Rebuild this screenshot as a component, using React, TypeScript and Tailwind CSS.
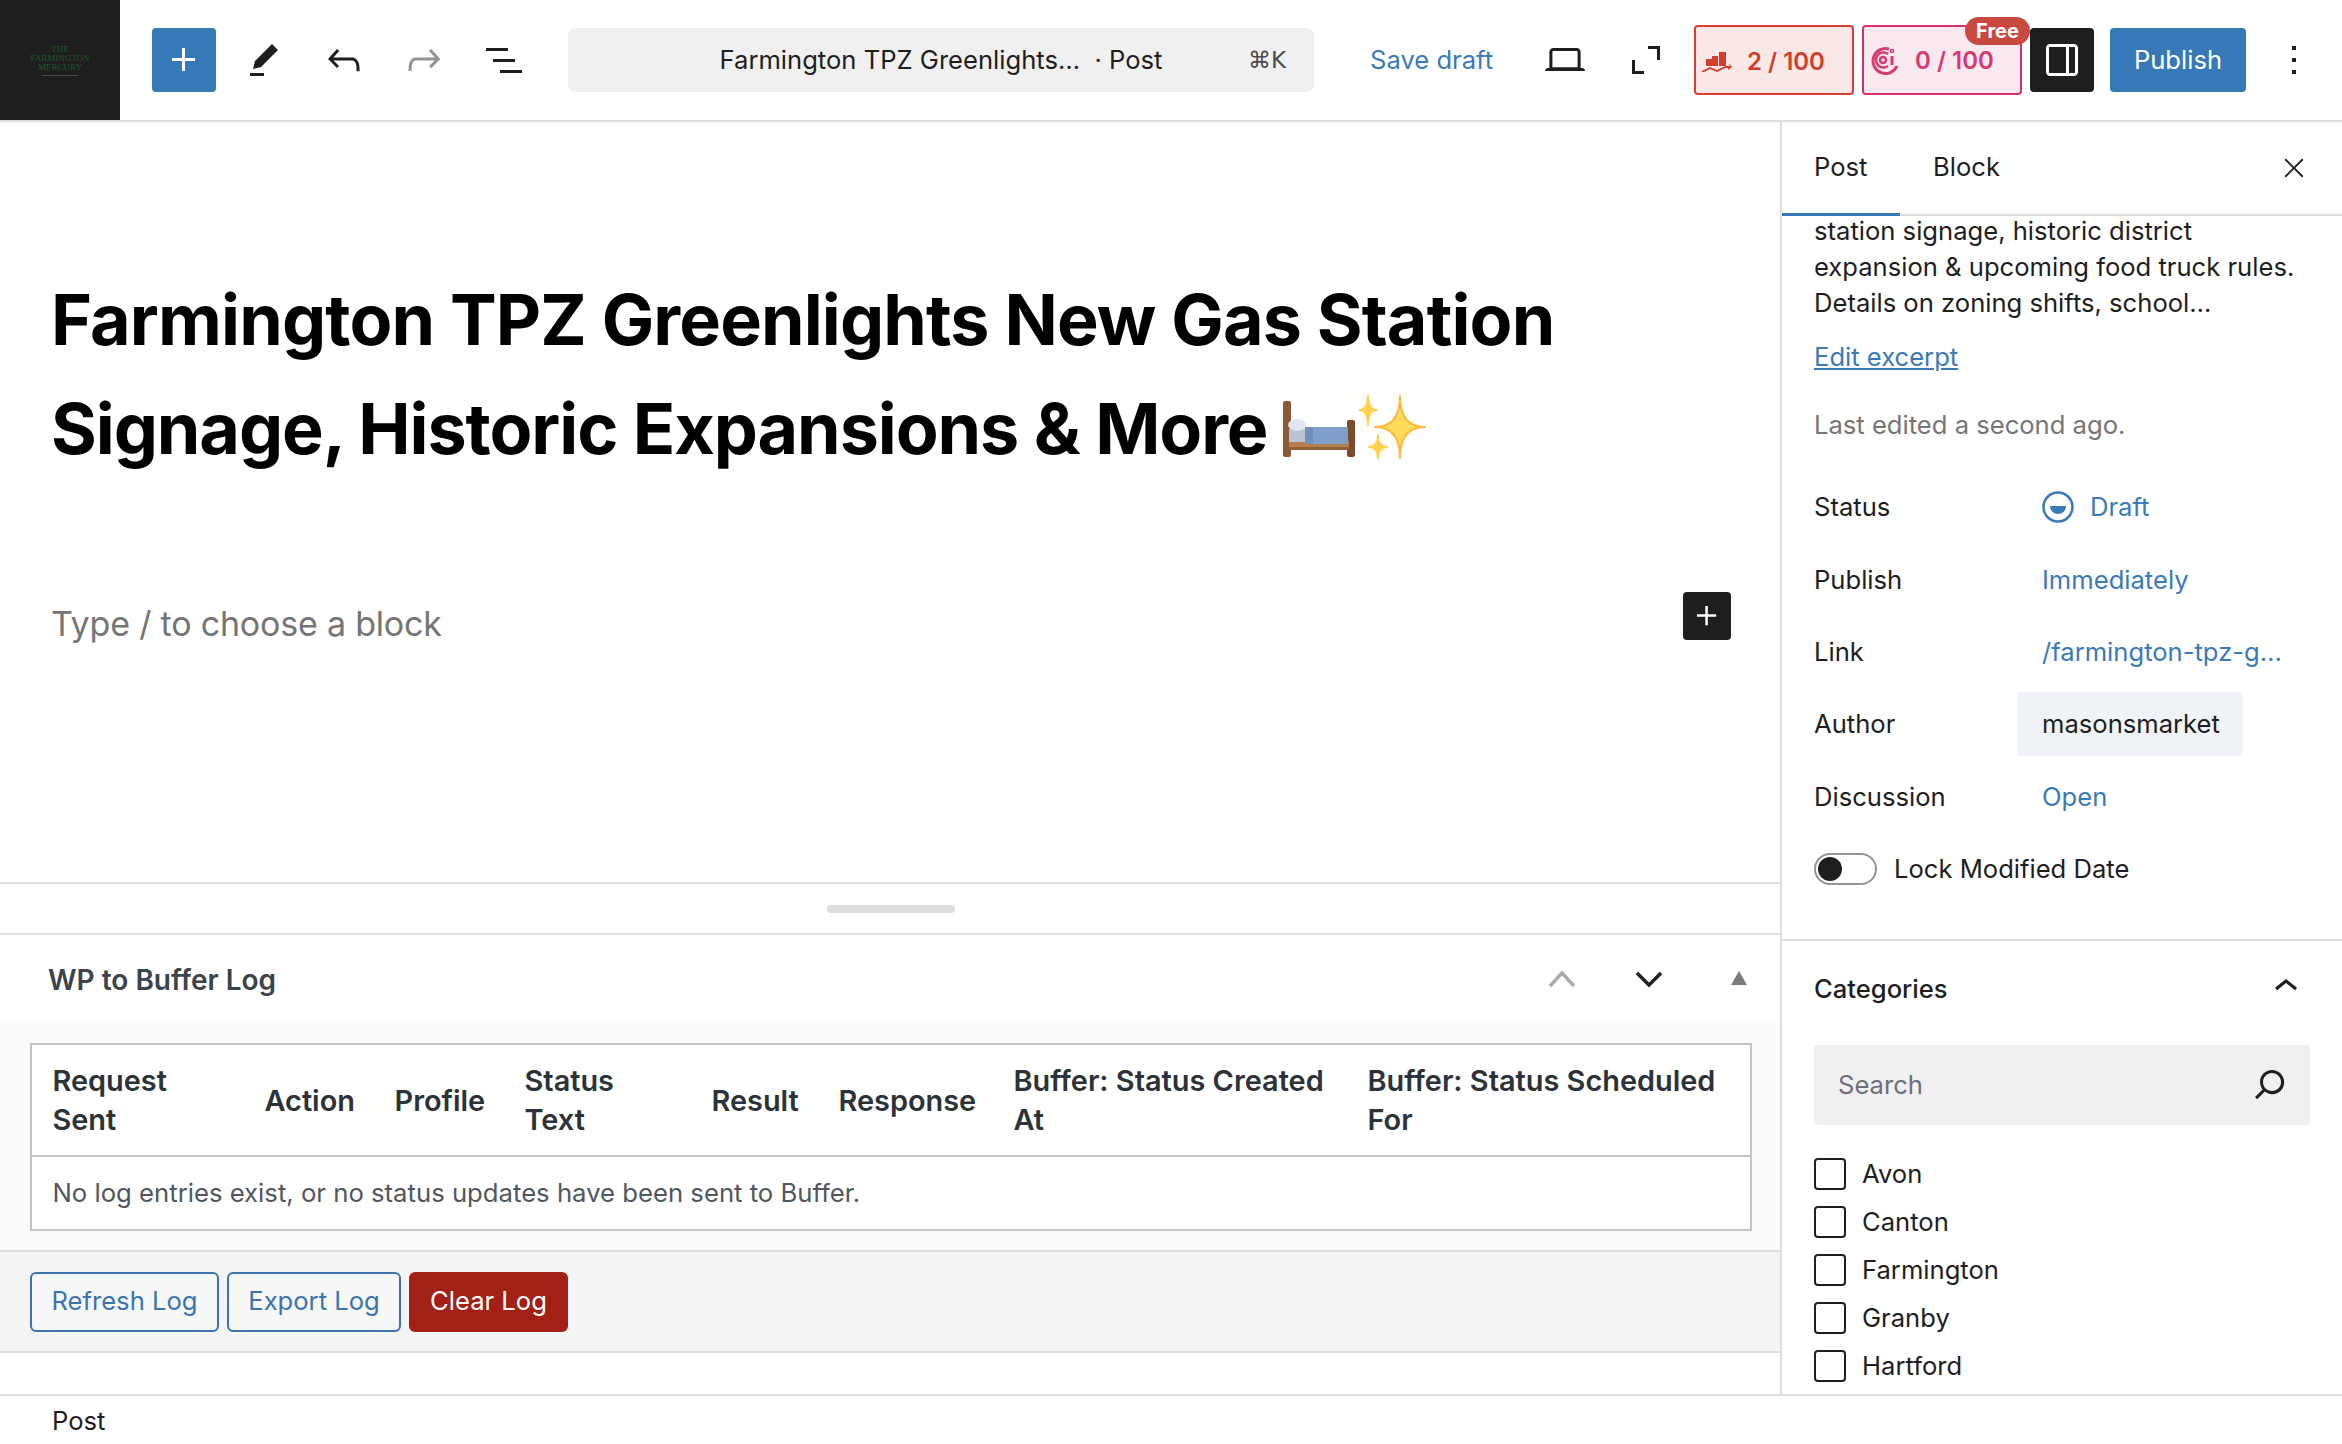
const Icon = ({ d, className = "w-12 h-12 fill-[#1e1e1e]" }: { d: string; className?: string }) => (
    <svg viewBox="0 0 24 24" className={className}>
        <path d={d} />
    </svg>
)

const icons = {
    plus: "M11 12.5V17.5H12.5V12.5H17.5V11H12.5V6H11V11H6V12.5H11Z",
    pen: "m19 7-3-3-8.5 8.5-1 4 4-1L19 7Zm-7 11.5H5V20h7v-1.5Z",
    undo: "M18.3 11.7c-.6-.6-1.4-.9-2.3-.9H6.7l2.9-3.3-1.1-1-4.5 5L8.5 16l1-1-2.7-2.7H16c.5 0 .9.2 1.3.5 1 1 1 3.4 1 4.5v.3h1.5v-.2c0-1.5 0-4.3-1.5-5.7z",
    redo: "M15.6 6.5l-1.1 1 2.9 3.3H8c-.9 0-1.7.3-2.3.9-1.4 1.5-1.4 4.2-1.4 5.6v.2h1.5v-.3c0-1.1 0-3.5 1-4.5.3-.3.7-.5 1.3-.5h9.2L14.5 15l1.1 1.1 4.6-4.6-4.6-5z",
    list: "M3 6h11v1.5H3V6Zm3.5 5.5h11V13h-11v-1.5ZM21 17H10v1.5h11V17Z",
    laptop: "M20.5 16h-.7V8c0-1.1-.9-2-2-2H6.2c-1.1 0-2 .9-2 2v8h-.7c-.8 0-1.5.7-1.5 1.5h20c0-.8-.7-1.5-1.5-1.5zM5.7 8c0-.3.2-.5.5-.5h11.6c.3 0 .5.2.5.5v7.6H5.7V8z",
    fullscreen: "M5 12v7h6v-1.5H6.5V12H5Z M13 5v1.5h4.5V12H19V5h-6Z",
    sidebar: "M18 4H6c-1.1 0-2 .9-2 2v12c0 1.1.9 2 2 2h12c1.1 0 2-.9 2-2V6c0-1.1-.9-2-2-2zm-4 14.5H6c-.3 0-.5-.2-.5-.5V6c0-.3.2-.5.5-.5h8v13zm4.5-.5c0 .3-.2.5-.5.5h-2.5v-13H18c.3 0 .5.2.5.5v12z",
    more: "M13 19h-2v-2h2v2zm0-6h-2v-2h2v2zm0-6h-2V5h2v2z",
    close: "m13.06 12 6.47-6.47-1.06-1.06L12 10.94 5.53 4.47 4.47 5.53 10.94 12l-6.47 6.47 1.06 1.06L12 13.06l6.47 6.47 1.06-1.06L13.06 12Z",
    chevronUp: "M6.5 12.4L12 8l5.5 4.4-.9 1.2L12 10l-4.5 3.6-1-1.2z",
    search: "M13 5c-3.3 0-6 2.7-6 6 0 1.4.5 2.7 1.3 3.7l-3.8 3.8 1.1 1.1 3.8-3.8c1 .8 2.3 1.3 3.7 1.3 3.3 0 6-2.7 6-6S16.3 5 13 5zm0 10.5c-2.5 0-4.5-2-4.5-4.5s2-4.5 4.5-4.5 4.5 2 4.5 4.5-2 4.5-4.5 4.5z",
}

const Bed = () => (
    <svg viewBox="0 0 72 56" className="inline-block w-[72px] h-[56px] align-[-3px]">
        <rect x="0" y="0" width="8" height="56" rx="2" fill="#8a5a34" />
        <rect x="64" y="19" width="8" height="37" rx="2" fill="#7a4c2a" />
        <rect x="6" y="40" width="60" height="9" fill="#b57f4e" />
        <rect x="6" y="46" width="60" height="3" fill="#8f5f36" />
        <rect x="6" y="28" width="18" height="13" fill="#b9c4d2" />
        <ellipse cx="14" cy="24" rx="9" ry="6" fill="#dfe6f1" />
        <rect x="22" y="26" width="43" height="17" rx="1" fill="#7f9fc8" />
        <rect x="22" y="26" width="8" height="17" fill="#6f90bb" />
    </svg>
)

const star = (cx: number, cy: number, r: number, h: number) =>
    `M${cx} ${cy - h}Q${cx} ${cy} ${cx + r} ${cy}Q${cx} ${cy} ${cx} ${cy + h}Q${cx} ${cy} ${cx - r} ${cy}Q${cx} ${cy} ${cx} ${cy - h}Z`

const Sparkles = () => (
    <svg viewBox="0 0 68 64" className="inline-block w-[68px] h-[64px] align-[-5px] ml-[4px]">
        <path d={star(9, 15, 9, 15)} fill="#fdd24d" stroke="#fdd24d" strokeWidth="2" strokeLinejoin="round" />
        <path d={star(19, 52, 9, 12)} fill="#fdd24d" stroke="#fdd24d" strokeWidth="2" strokeLinejoin="round" />
        <path d={star(41, 32, 25, 31)} fill="#fddc5c" stroke="#fbb93e" strokeWidth="2" strokeLinejoin="round" />
    </svg>
)

const RowLabel = ({ label, children }: { label: string; children: any }) => (
    <div className="flex items-center h-[72.4px]">
        <div className="w-[228px] shrink-0">{label}</div>
        {children}
    </div>
)

const cols = [
    ["w-[212px]", "Request\nSent"],
    ["w-[130px]", "Action"],
    ["w-[130px]", "Profile"],
    ["w-[187px]", "Status\nText"],
    ["w-[127px]", "Result"],
    ["w-[175px]", "Response"],
    ["w-[354px]", "Buffer: Status Created\nAt"],
    ["", "Buffer: Status Scheduled\nFor"],
]

const categories = ["Avon", "Canton", "Farmington", "Granby", "Hartford"]

export default function App() {
    return (
        <div className="w-[2342px] h-[1444px] overflow-hidden flex flex-col bg-white text-[#1e1e1e] text-[25.6px] font-['Inter',sans-serif]">
            {/* top bar */}
            <div className="h-[122px] shrink-0 flex items-center border-b-2 border-[#dedede]">
                <div className="w-[120px] h-[120px] bg-[#1e1e1e] flex flex-col items-center justify-center text-[#1f5a2e] font-['Liberation_Serif',serif] text-[9px] leading-[9px] uppercase">
                    <span>The</span>
                    <span>Farmington</span>
                    <span>Mercury</span>
                    <span className="w-[36px] h-px bg-[#4a4a4a] mt-[3px]"></span>
                </div>
                <button className="ml-[32px] w-16 h-16 rounded-[4px] bg-[#3579b6] flex items-center justify-center">
                    <Icon d={icons.plus} className="w-12 h-12 fill-white" />
                </button>
                <div className="ml-4 flex gap-4">
                    <div className="w-16 h-16 flex items-center justify-center"><Icon d={icons.pen} /></div>
                    <div className="w-16 h-16 flex items-center justify-center"><Icon d={icons.undo} /></div>
                    <div className="w-16 h-16 flex items-center justify-center"><Icon d={icons.redo} className="w-12 h-12 fill-[#949494]" /></div>
                    <div className="w-16 h-16 flex items-center justify-center"><Icon d={icons.list} /></div>
                </div>
                <div className="ml-[32px] w-[746px] h-16 pt-[1px] rounded-[8px] bg-[#f0f0f0] grid grid-cols-[1fr_auto_1fr] items-center">
                    <span></span>
                    <span className="whitespace-pre">Farmington TPZ Greenlights…  · Post</span>
                    <span className="justify-self-end pr-[28px] text-[#4a4a4a] font-['DejaVu_Sans','Inter',sans-serif] text-[23px]">⌘K</span>
                </div>
                <div className="ml-[56px] w-[163px] text-[#3a7ab8]">Save draft</div>
                <div className="w-16 h-16 flex items-center justify-center"><Icon d={icons.laptop} /></div>
                <div className="ml-[17px] w-16 h-16 flex items-center justify-center"><Icon d={icons.fullscreen} /></div>
                <div className="ml-[16px] w-[160px] h-[70px] rounded-[4px] border-2 border-[#d9402f] bg-[#f8e8e6] flex items-center text-[#d43c2e] font-semibold text-[24px]">
                    <svg viewBox="0 0 30 20" className="ml-[6px] mt-[3px] w-[30px] h-[20px] fill-[#d43c2e]">
                        <rect x="4" y="7" width="6" height="7" />
                        <rect x="10" y="4" width="6" height="10" />
                        <rect x="17" y="0" width="7" height="14" />
                        <path d="M0 19l8-4 7 3 8-4 5 0-1-3 3 4-4 3 0-2-3 0-8 4-7-3-8 4z" />
                    </svg>
                    <span className="ml-[15px] mt-[3px]">2 / 100</span>
                </div>
                <div className="relative ml-[8px] w-[160px] h-[70px] rounded-[4px] border-2 border-[#d6336c] bg-[#fae8ef] flex items-center text-[#d63a6f] font-semibold text-[24px]">
                    <svg viewBox="0 0 30 30" className="ml-[5px] w-[30px] h-[30px] fill-none stroke-[#d63a6f]">
                        <path d="M20 4A12.5 12.5 0 1 0 28 21" strokeWidth="3" />
                        <path d="M19 9A7.5 7.5 0 1 0 19 21" strokeWidth="2.5" />
                        <circle cx="14" cy="15" r="3" strokeWidth="2.5" />
                        <path d="M23 11v9" strokeWidth="3" />
                        <circle cx="23" cy="6" r="1.6" strokeWidth="1.5" />
                    </svg>
                    <span className="ml-[16px] mt-[1px]">0 / 100</span>
                    <span className="absolute -top-[10px] -right-[10px] w-[65px] h-[28px] rounded-[14px] bg-[#c94840] text-white text-[20px] font-bold flex items-center justify-center">Free</span>
                </div>
                <button className="ml-[8px] w-16 h-16 rounded-[4px] bg-[#1e1e1e] flex items-center justify-center">
                    <Icon d={icons.sidebar} className="w-12 h-12 fill-white" />
                </button>
                <button className="ml-4 w-[136px] h-16 rounded-[4px] bg-[#3579b6] text-white">Publish</button>
                <div className="ml-4 w-16 h-16 flex items-center justify-center"><Icon d={icons.more} /></div>
            </div>

            <div className="flex-1 flex min-h-0">
                {/* editor column */}
                <div className="w-[1780px] shrink-0 flex flex-col">
                    <div className="h-[762px] shrink-0 border-b-2 border-[#dedede] pl-[51px] pr-[49px]">
                        <h1 className="pt-[143px] font-bold text-[70px] leading-[109px] text-black tracking-[-0.85px]">
                            Farmington TPZ Greenlights New Gas Station<br />
                            <span className="tracking-[-1.07px]">Signage, Historic Expansions & More </span><Bed /><Sparkles />
                        </h1>
                        <div className="mt-[109px] flex justify-between items-start">
                            <div className="pt-[4px] text-[34px] leading-[56px] text-[#757575] tracking-[-0.2px]">Type / to choose a block</div>
                            <button className="w-12 h-12 rounded-[4px] bg-[#1e1e1e] flex items-center justify-center">
                                <Icon d={icons.plus} className="w-10 h-10 fill-white" />
                            </button>
                        </div>
                    </div>
                    <div className="h-[51px] shrink-0 border-b-2 border-[#dedede] flex items-center justify-center">
                        <div className="ml-[2px] w-[128px] h-[8px] rounded-[4px] bg-[#dddddd]"></div>
                    </div>
                    <div className="h-[88px] shrink-0 flex items-center pl-[48px]">
                        <div className="flex-1 font-semibold text-[#3c434a] text-[28px] pt-[2px]">WP to Buffer Log</div>
                        <svg viewBox="0 0 28 18" className="w-[28px] h-[18px] fill-none stroke-[#aaaaaa] stroke-[3.5px]"><path d="M2 16L14 3L26 16" /></svg>
                        <svg viewBox="0 0 28 18" className="ml-[59px] w-[28px] h-[18px] fill-none stroke-[#1d2327] stroke-[3.5px]"><path d="M2 3L14 15L26 3" /></svg>
                        <svg viewBox="0 0 18 14" className="ml-[67px] mr-[32px] -mt-[2px] w-[18px] h-[14px] fill-[#7a7a7a]"><path d="M9 0L17 14H1Z" /></svg>
                    </div>
                    <div className="h-[229px] shrink-0 bg-[#fafafa] border-b-2 border-[#dedede] pt-[20px] pl-[30px] pr-[28px]">
                        <table className="w-full table-fixed border-2 border-[#c3c4c7] bg-white border-separate border-spacing-0">
                            <thead>
                                <tr>
                                    {cols.map(c => (
                                        <th key={c[1]} className={`${c[0]} pl-[20.5px] pr-0 h-[112px] text-left font-semibold text-[28.9px] leading-[39px] text-[#2c3338] border-b-2 border-[#c3c4c7] whitespace-pre-line`}>{c[1]}</th>
                                    ))}
                                </tr>
                            </thead>
                            <tbody>
                                <tr>
                                    <td colSpan={8} className="pl-[20.5px] h-[72px] text-[#50575e] text-[25.7px]">No log entries exist, or no status updates have been sent to Buffer.</td>
                                </tr>
                            </tbody>
                        </table>
                    </div>
                    <div className="h-[101px] shrink-0 bg-[#f4f4f4] border-b-2 border-[#dedede] flex items-center gap-[8px] pl-[30px]">
                        <button className="w-[189px] h-[60px] rounded-[6px] border-2 border-[#3a74b0] bg-[#f6f7f7] text-[#3a74b0]">Refresh Log</button>
                        <button className="w-[174px] h-[60px] rounded-[6px] border-2 border-[#3a74b0] bg-[#f6f7f7] text-[#3a74b0]">Export Log</button>
                        <button className="w-[159px] h-[60px] rounded-[6px] bg-[#a32014] text-white">Clear Log</button>
                    </div>
                    <div className="flex-1"></div>
                </div>

                {/* sidebar */}
                <div className="flex-1 border-l-2 border-[#dedede] flex flex-col overflow-hidden">
                    <div className="h-[94px] shrink-0 border-b-2 border-[#dedede] flex items-center">
                        <div className="w-[118px] h-[93px] pl-[32px] pb-[1px] flex items-center border-b-[3px] border-[#3579b6] -mb-[3px]">Post</div>
                        <div className="ml-[33px] -mt-[2px]">Block</div>
                        <div className="ml-auto mr-[24px] w-12 h-12 flex items-center justify-center"><Icon d={icons.close} className="w-[30px] h-[30px] fill-[#1e1e1e]" /></div>
                    </div>
                    <div className="flex-1 overflow-hidden">
                        <div className="-mt-[3px] pl-[32px] pr-[30px] leading-[36px]">
                            <div>station signage, historic district<br />expansion & upcoming food truck rules.<br />Details on zoning shifts, school…</div>
                            <div className="mt-[18px] text-[#3a7ab8] underline">Edit excerpt</div>
                            <div className="mt-[32px] text-[#757575]">Last edited a second ago.</div>
                            <div className="mt-[28px] h-[434px]">
                                <RowLabel label="Status">
                                    <svg viewBox="0 0 32 32" className="w-[32px] h-[32px]">
                                        <circle cx="16" cy="16" r="14.5" fill="none" stroke="#3a7ab8" strokeWidth="2.5" />
                                        <path d="M8 15h16a8 8 0 0 1-16 0Z" fill="#3a7ab8" />
                                    </svg>
                                    <span className="ml-[16px] text-[#3a7ab8]">Draft</span>
                                </RowLabel>
                                <RowLabel label="Publish"><span className="text-[#3a7ab8]">Immediately</span></RowLabel>
                                <RowLabel label="Link"><span className="text-[#3a7ab8]">/farmington-tpz-g…</span></RowLabel>
                                <RowLabel label="Author">
                                    <span className="-ml-[25px] pl-[25px] w-[226px] h-[64px] rounded-[4px] bg-[#f0f4f8] flex items-center">masonsmarket</span>
                                </RowLabel>
                                <RowLabel label="Discussion"><span className="text-[#3a7ab8]">Open</span></RowLabel>
                                <div className="flex items-center h-[72.4px]">
                                    <div className="w-[63px] h-[32px] rounded-[16px] border-2 border-[#949494] bg-white flex items-center pl-[2px]">
                                        <div className="w-[24px] h-[24px] rounded-full bg-[#1e1e1e]"></div>
                                    </div>
                                    <span className="ml-[17px]">Lock Modified Date</span>
                                </div>
                            </div>
                        </div>
                        <div className="mt-[34px] border-t-2 border-[#dedede] pl-[32px] pr-[32px]">
                            <div className="h-[96px] flex items-center justify-between font-medium">
                                <span>Categories</span>
                                <Icon d={icons.chevronUp} className="w-12 h-12 fill-[#1e1e1e] -mt-[4px]" />
                            </div>
                            <div className="mt-[8px] h-[80px] rounded-[4px] bg-[#f0f0f0] flex items-center justify-between pl-[24px] pr-[16px]">
                                <span className="text-[#6d6f76]">Search</span>
                                <Icon d={icons.search} className="w-12 h-12 fill-[#1e1e1e] -mt-[3px]" />
                            </div>
                            <div className="mt-[25px] flex flex-col">
                                {categories.map(c => (
                                    <div key={c} className="h-[48px] flex items-center">
                                        <div className="w-[32px] h-[32px] rounded-[4px] border-2 border-[#1e1e1e] bg-white"></div>
                                        <span className="ml-[16px]">{c}</span>
                                    </div>
                                ))}
                            </div>
                        </div>
                    </div>
                </div>
            </div>

            {/* footer */}
            <div className="h-[50px] shrink-0 border-t-2 border-[#dedede] flex items-center pl-[52px] pt-[2px] bg-white">Post</div>
        </div>
    )
}
